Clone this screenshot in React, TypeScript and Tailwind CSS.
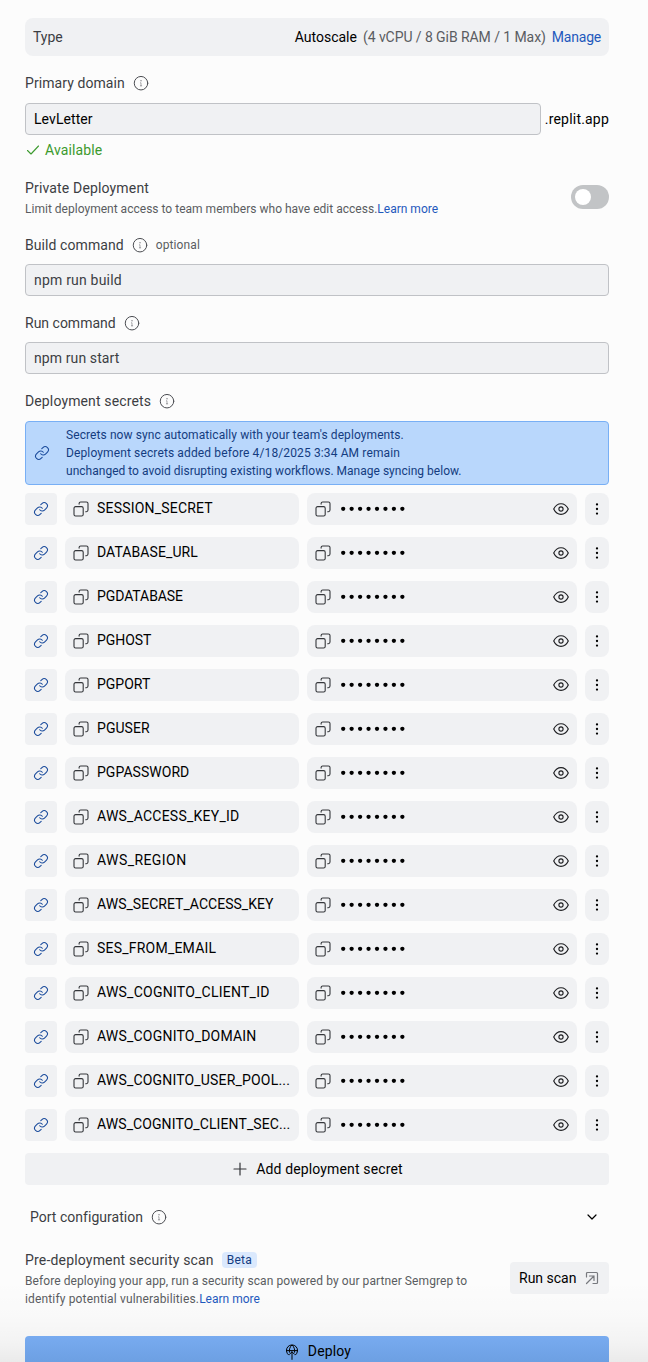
import type { ReactNode } from "react";

const secrets: { name: string; track: string }[] = [
  { name: "SESSION_SECRET", track: "tracking-[0.2px]" },
  { name: "DATABASE_URL", track: "tracking-[0.08px]" },
  { name: "PGDATABASE", track: "tracking-[-0.08px]" },
  { name: "PGHOST", track: "tracking-[-0.05px]" },
  { name: "PGPORT", track: "tracking-[0px]" },
  { name: "PGUSER", track: "tracking-[0.05px]" },
  { name: "PGPASSWORD", track: "tracking-[0.04px]" },
  { name: "AWS_ACCESS_KEY_ID", track: "tracking-[0.24px]" },
  { name: "AWS_REGION", track: "tracking-[0.43px]" },
  { name: "AWS_SECRET_ACCESS_KEY", track: "tracking-[0.03px]" },
  { name: "SES_FROM_EMAIL", track: "tracking-[0.22px]" },
  { name: "AWS_COGNITO_CLIENT_ID", track: "tracking-[0.24px]" },
  { name: "AWS_COGNITO_DOMAIN", track: "tracking-[0.21px]" },
  { name: "AWS_COGNITO_USER_POOL...", track: "tracking-[0.18px]" },
  { name: "AWS_COGNITO_CLIENT_SEC...", track: "tracking-[0.09px]" },
];

function Icon({ className, children }: { className: string; children: ReactNode }) {
  return (
    <svg
      viewBox="0 0 16 16"
      fill="none"
      stroke="currentColor"
      strokeLinecap="round"
      strokeLinejoin="round"
      className={`size-4 shrink-0 ${className}`}
    >
      {children}
    </svg>
  );
}

function InfoIcon() {
  return (
    <Icon className="text-[#4b4d52]">
      <circle cx="8" cy="8.2" r="6.75" strokeWidth="1" />
      <path d="M7.4 7.8H8V10.8M7.4 10.8h1.3" strokeWidth="0.75" opacity="0.6" />
      <circle cx="7.9" cy="5.8" r="0.35" strokeWidth="0.6" opacity="0.6" />
    </Icon>
  );
}

function LinkIcon() {
  return (
    <Icon className="text-[#1a4b9c]">
      <path
        d="M6.7 8.7a3.2 3.2 0 0 0 4.8.35l2-2a3.2 3.2 0 0 0-4.55-4.5L7.8 3.7M9.3 7.3a3.2 3.2 0 0 0-4.8-.35l-2 2a3.2 3.2 0 0 0 4.55 4.5L8.2 12.3"
        strokeWidth="1.05"
      />
    </Icon>
  );
}

function CopyIcon() {
  return (
    <Icon className="text-[#34363a]">
      <rect x="1" y="5.6" width="9.2" height="9.4" rx="1.6" strokeWidth="1.1" />
      <path d="M6.1 3.1V2.6A1.6 1.6 0 0 1 7.7 1h5.7a1.6 1.6 0 0 1 1.6 1.6v6.5a1.6 1.6 0 0 1-1.6 1.6h-.7" strokeWidth="1.1" />
    </Icon>
  );
}

function EyeIcon() {
  return (
    <Icon className="text-[#1c1d20]">
      <path d="M.7 8C2.3 4.7 5 2.7 8 2.7S13.7 4.7 15.3 8C13.7 11.3 11 13.3 8 13.3S2.3 11.3.7 8Z" strokeWidth="1.15" />
      <circle cx="8" cy="8" r="2.1" strokeWidth="1.1" />
    </Icon>
  );
}

function DotsIcon() {
  return (
    <Icon className="text-black">
      <g fill="currentColor" stroke="none">
        <circle cx="8" cy="3.4" r="1.15" />
        <circle cx="8" cy="8" r="1.15" />
        <circle cx="8" cy="12.6" r="1.15" />
      </g>
    </Icon>
  );
}

function MaskedValue() {
  return (
    <svg viewBox="0 0 66 8" className="ml-[9px] h-2 w-[66px] fill-black">
      {[0, 1, 2, 3, 4, 5, 6, 7].map((i) => (
        <circle key={i} cx={3.2 + i * 8.45} cy="3.8" r="2.15" />
      ))}
    </svg>
  );
}

function Label({ text, track, children }: { text: string; track: string; children?: ReactNode }) {
  return (
    <div className="flex h-5 items-center gap-2">
      <span className={`text-[#3c3e43] ${track}`}>{text}</span>
      {children}
    </div>
  );
}

function Field({ text, className }: { text: string; className: string }) {
  return (
    <div className="flex h-8 grow items-center rounded-[4px] border border-[#c0c2c6] bg-[#f0f1f3] px-2">
      <span className={className}>{text}</span>
    </div>
  );
}

function SecretRow({ name, track }: { name: string; track: string }) {
  return (
    <div className="flex h-8 gap-2">
      <div className="flex w-8 items-center justify-center rounded-[4px] bg-[#f0f1f3]">
        <LinkIcon />
      </div>
      <div className="flex w-[234px] items-center gap-2 rounded-lg bg-[#f0f1f3] px-2">
        <CopyIcon />
        <span className={`pb-[2px] whitespace-nowrap text-black ${track}`}>{name}</span>
      </div>
      <div className="flex w-[270px] items-center rounded-lg bg-[#f0f1f3] px-2">
        <CopyIcon />
        <div className="grow">
          <MaskedValue />
        </div>
        <EyeIcon />
      </div>
      <div className="flex w-6 items-center justify-center rounded-lg bg-[#f0f1f3]">
        <DotsIcon />
      </div>
    </div>
  );
}

export default function App() {
  return (
    <div className="h-[1362px] w-[648px] overflow-hidden bg-[#fcfcfc] bg-[linear-gradient(to_bottom,transparent_1280px,rgba(0,0,0,0.012)_1315px,rgba(0,0,0,0.035)_1342px,rgba(0,0,0,0.07)_1362px)] pl-[25px] pr-[39px] pt-[18px] font-['Roboto',sans-serif] text-sm leading-5 text-black">
      <div className="flex h-[38px] items-center rounded-lg bg-[#f0f1f3] px-2">
        <span className="grow text-[#3c3e43]">Type</span>
        <span className="mr-1.5">Autoscale</span>
        <span className="mr-1.5 tracking-[-0.07px] text-[#5a5c61]">(4 vCPU / 8 GiB RAM / 1 Max)</span>
        <a className="tracking-[-0.22px] text-[#1f59bd]">Manage</a>
      </div>

      <section className="mt-[17px]">
        <Label text="Primary domain" track="tracking-[0.08px]">
          <InfoIcon />
        </Label>
        <div className="mt-[10px] flex items-center gap-1">
          <Field text="LevLetter" className="tracking-[0.08px] text-black" />
          <span className="tracking-[0.2px]">.replit.app</span>
        </div>
        <div className="mt-[5px] flex h-5 items-center gap-1 text-[#3c9a2e]">
          <Icon className="">
            <path d="M2.5 8.5 6 12l7.5-8" strokeWidth="1.1" />
          </Icon>
          <span className="tracking-[0.12px]">Available</span>
        </div>
      </section>

      <section className="mt-[18px] flex h-10 justify-between">
        <div>
          <Label text="Private Deployment" track="tracking-[0.16px]" />
          <p className="mt-[2px] text-xs leading-[18px] text-[#5a5c61]">
            <span className="tracking-[0.015px]">Limit deployment access to team members who have edit access.</span>
            <a className="text-[#1f59bd]">Learn more</a>
          </p>
        </div>
        <div className="mt-[7px] flex h-6 w-[38px] items-center rounded-full bg-[#c2c4c6] px-1">
          <span className="size-4 rounded-full bg-white" />
        </div>
      </section>

      <section className="mt-[17px]">
        <Label text="Build command" track="tracking-[0.08px]">
          <InfoIcon />
          <span className="text-xs tracking-[0.1px] text-[#5a5c61]">optional</span>
        </Label>
        <div className="mt-[9px] flex">
          <Field text="npm run build" className="tracking-[0.2px] text-[#3c3e43]" />
        </div>
      </section>

      <section className="mt-[17px]">
        <Label text="Run command" track="tracking-[0px]">
          <InfoIcon />
        </Label>
        <div className="mt-[9px] flex">
          <Field text="npm run start" className="tracking-[0.1px] text-[#3c3e43]" />
        </div>
      </section>

      <section className="mt-[17px]">
        <Label text="Deployment secrets" track="tracking-[0.13px]">
          <InfoIcon />
        </Label>
        <div className="mt-[10px] flex h-16 items-center gap-4 rounded-[4px] border border-[#78aff5] bg-[#b9d7fc] px-2 text-xs leading-[18px] text-[#143c80]">
          <LinkIcon />
          <p>
            <span className="tracking-[0.09px]">Secrets now sync automatically with your team's deployments.</span>
            <br />
            <span className="tracking-[0.125px]">Deployment secrets added before 4/18/2025 3:34 AM remain</span>
            <br />
            <span className="tracking-[0.015px]">unchanged to avoid disrupting existing workflows. Manage syncing below.</span>
          </p>
        </div>
        <div className="mt-2 flex flex-col gap-3">
          {secrets.map((s) => (
            <SecretRow key={s.name} name={s.name} track={s.track} />
          ))}
          <div className="flex h-8 items-center justify-center gap-2 rounded-[4px] bg-[#f0f1f3] pl-[1px]">
            <Icon className="text-[#34363a]">
              <path d="M8 2v12M2 8h12" strokeWidth="1.2" />
            </Icon>
            <span className="tracking-[0.14px]">Add deployment secret</span>
          </div>
        </div>
      </section>

      <section className="mt-[22px] flex items-center justify-between pl-[5px] pr-[9px]">
        <Label text="Port configuration" track="tracking-[0.02px]">
          <InfoIcon />
        </Label>
        <Icon className="text-black">
          <path d="m4 6 4 4 4-4" strokeWidth="1.2" />
        </Icon>
      </section>

      <section className="mt-[23px] flex h-[58px] justify-between">
        <div>
          <Label text="Pre-deployment security scan" track="tracking-[0.18px]">
            <span className="flex h-4 items-center rounded-[4px] bg-[#dbe9fd] px-[5px] text-xs tracking-[0.2px] text-[#143c80]">Beta</span>
          </Label>
          <p className="mt-[2px] text-xs leading-[18px] text-[#5a5c61]">
            <span className="tracking-[0.085px]">Before deploying your app, run a security scan powered by our partner Semgrep to</span>
            <br />
            <span className="tracking-[0.15px]">identify potential vulnerabilities.</span>
            <a className="text-[#1f59bd]">Learn more</a>
          </p>
        </div>
        <div className="mt-[12px] flex h-8 w-[99px] items-center gap-2 rounded-[4px] bg-[#f0f1f3] pl-[9px]">
          <span>Run scan</span>
          <Icon className="text-[#77797e]">
            <path d="M2.5 7V3.5a1 1 0 0 1 1-1h9a1 1 0 0 1 1 1v9a1 1 0 0 1-1 1H9M2.5 13.5 10 6M5.5 6H10v4.5" strokeWidth="1.2" />
          </Icon>
        </div>
      </section>

      <div className="mt-[28px] flex h-8 items-center justify-center gap-2 rounded-[4px] bg-[linear-gradient(to_bottom,#78abf0,#6a9de0)] pl-[1px]">
        <Icon className="mb-[1px] text-black">
          <path
            d="M4.5 10.9A5.6 5.6 0 1 1 11.5 10.9M2.6 6.6h10.8M8 15.4V7.8M5.5 10.3 8 7.8l2.5 2.5M5.4 8.2C5 5.5 5.9 2.700 8 1c2.100 1.700 3 4.500 2.600 7.200"
            strokeWidth="1"
          />
        </Icon>
        <span className="mb-[2px] tracking-[0.15px]">Deploy</span>
      </div>
    </div>
  );
}
